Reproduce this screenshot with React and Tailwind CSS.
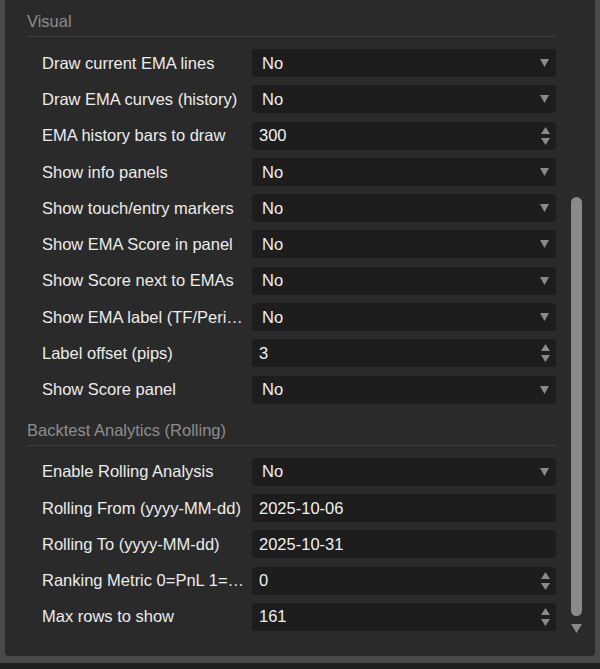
const visual = [
  { label: 'Draw current EMA lines', value: 'No', kind: 'select' },
  { label: 'Draw EMA curves (history)', value: 'No', kind: 'select' },
  { label: 'EMA history bars to draw', value: '300', kind: 'number' },
  { label: 'Show info panels', value: 'No', kind: 'select' },
  { label: 'Show touch/entry markers', value: 'No', kind: 'select' },
  { label: 'Show EMA Score in panel', value: 'No', kind: 'select' },
  { label: 'Show Score next to EMAs', value: 'No', kind: 'select' },
  { label: 'Show EMA label (TF/Period)', value: 'No', kind: 'select' },
  { label: 'Label offset (pips)', value: '3', kind: 'number' },
  { label: 'Show Score panel', value: 'No', kind: 'select' },
];

const backtest = [
  { label: 'Enable Rolling Analysis', value: 'No', kind: 'select' },
  { label: 'Rolling From (yyyy-MM-dd)', value: '2025-10-06', kind: 'text' },
  { label: 'Rolling To (yyyy-MM-dd)', value: '2025-10-31', kind: 'text' },
  { label: 'Ranking Metric 0=PnL 1=WinRate', value: '0', kind: 'number' },
  { label: 'Max rows to show', value: '161', kind: 'number' },
];

function Field({ value, kind }) {
  return (
    <div className={`flex-1 h-[28px] rounded-[4px] bg-[#1d1d1d] flex items-center text-[#f0f0f0] ${kind === 'select' ? 'pl-[10px]' : 'pl-[7px]'} pr-[6px]`}>
      <span className="flex-1">{value}</span>
      {kind === 'select' && (
        <svg width="9" height="8" viewBox="0 0 9 8" className="mr-[1px]">
          <path d="M0 0 L9 0 L4.5 8 Z" fill="#8a8a8a" />
        </svg>
      )}
      {kind === 'number' && (
        <svg width="9" height="18" viewBox="0 0 9 18">
          <path d="M0 7 L9 7 L4.5 0 Z" fill="#8a8a8a" />
          <path d="M0 11 L9 11 L4.5 18 Z" fill="#8a8a8a" />
        </svg>
      )}
    </div>
  );
}

function Section({ title, rows, first }) {
  return (
    <div className={first ? '' : 'mt-[16px]'}>
      <div className="h-[20px] leading-[20px] text-[#8e8e8e] mb-[5px]">{title}</div>
      <div className="h-px bg-[#3e3e3e]" />
      <div className="flex flex-col gap-[8.3px] mt-[12px]">
        {rows.map((r, i) => (
          <div key={i} className="flex items-center pl-[15px]">
            <div className="w-[203px] mr-[7px] truncate text-[#ececec]">{r.label}</div>
            <Field value={r.value} kind={r.kind} />
          </div>
        ))}
      </div>
    </div>
  );
}

export default function App() {
  return (
    <div className="w-[600px] h-[669px] bg-[#1f1f1f] overflow-hidden text-[16.5px]" style={{ fontFamily: '"Liberation Sans", Arial, sans-serif' }}>
      <div className="h-[663px] bg-[#494949] px-[5px] pb-[7px]">
        <div className="h-full bg-[#2a2a2a] rounded-b-[4px] flex">
          <div className="w-[529px] ml-[22px] pt-[11px]">
            <Section title="Visual" rows={visual} first />
            <Section title="Backtest Analytics (Rolling)" rows={backtest} />
          </div>
          <div className="w-[39px] flex flex-col items-center pl-[1px]">
            <div className="mt-[197px] w-[11px] h-[419px] rounded-full bg-[#8a8a8a]" />
            <svg width="11" height="9" viewBox="0 0 11 9" className="mt-[8px]">
              <path d="M0 0 L11 0 L5.5 9 Z" fill="#8a8a8a" />
            </svg>
          </div>
        </div>
      </div>
    </div>
  );
}
